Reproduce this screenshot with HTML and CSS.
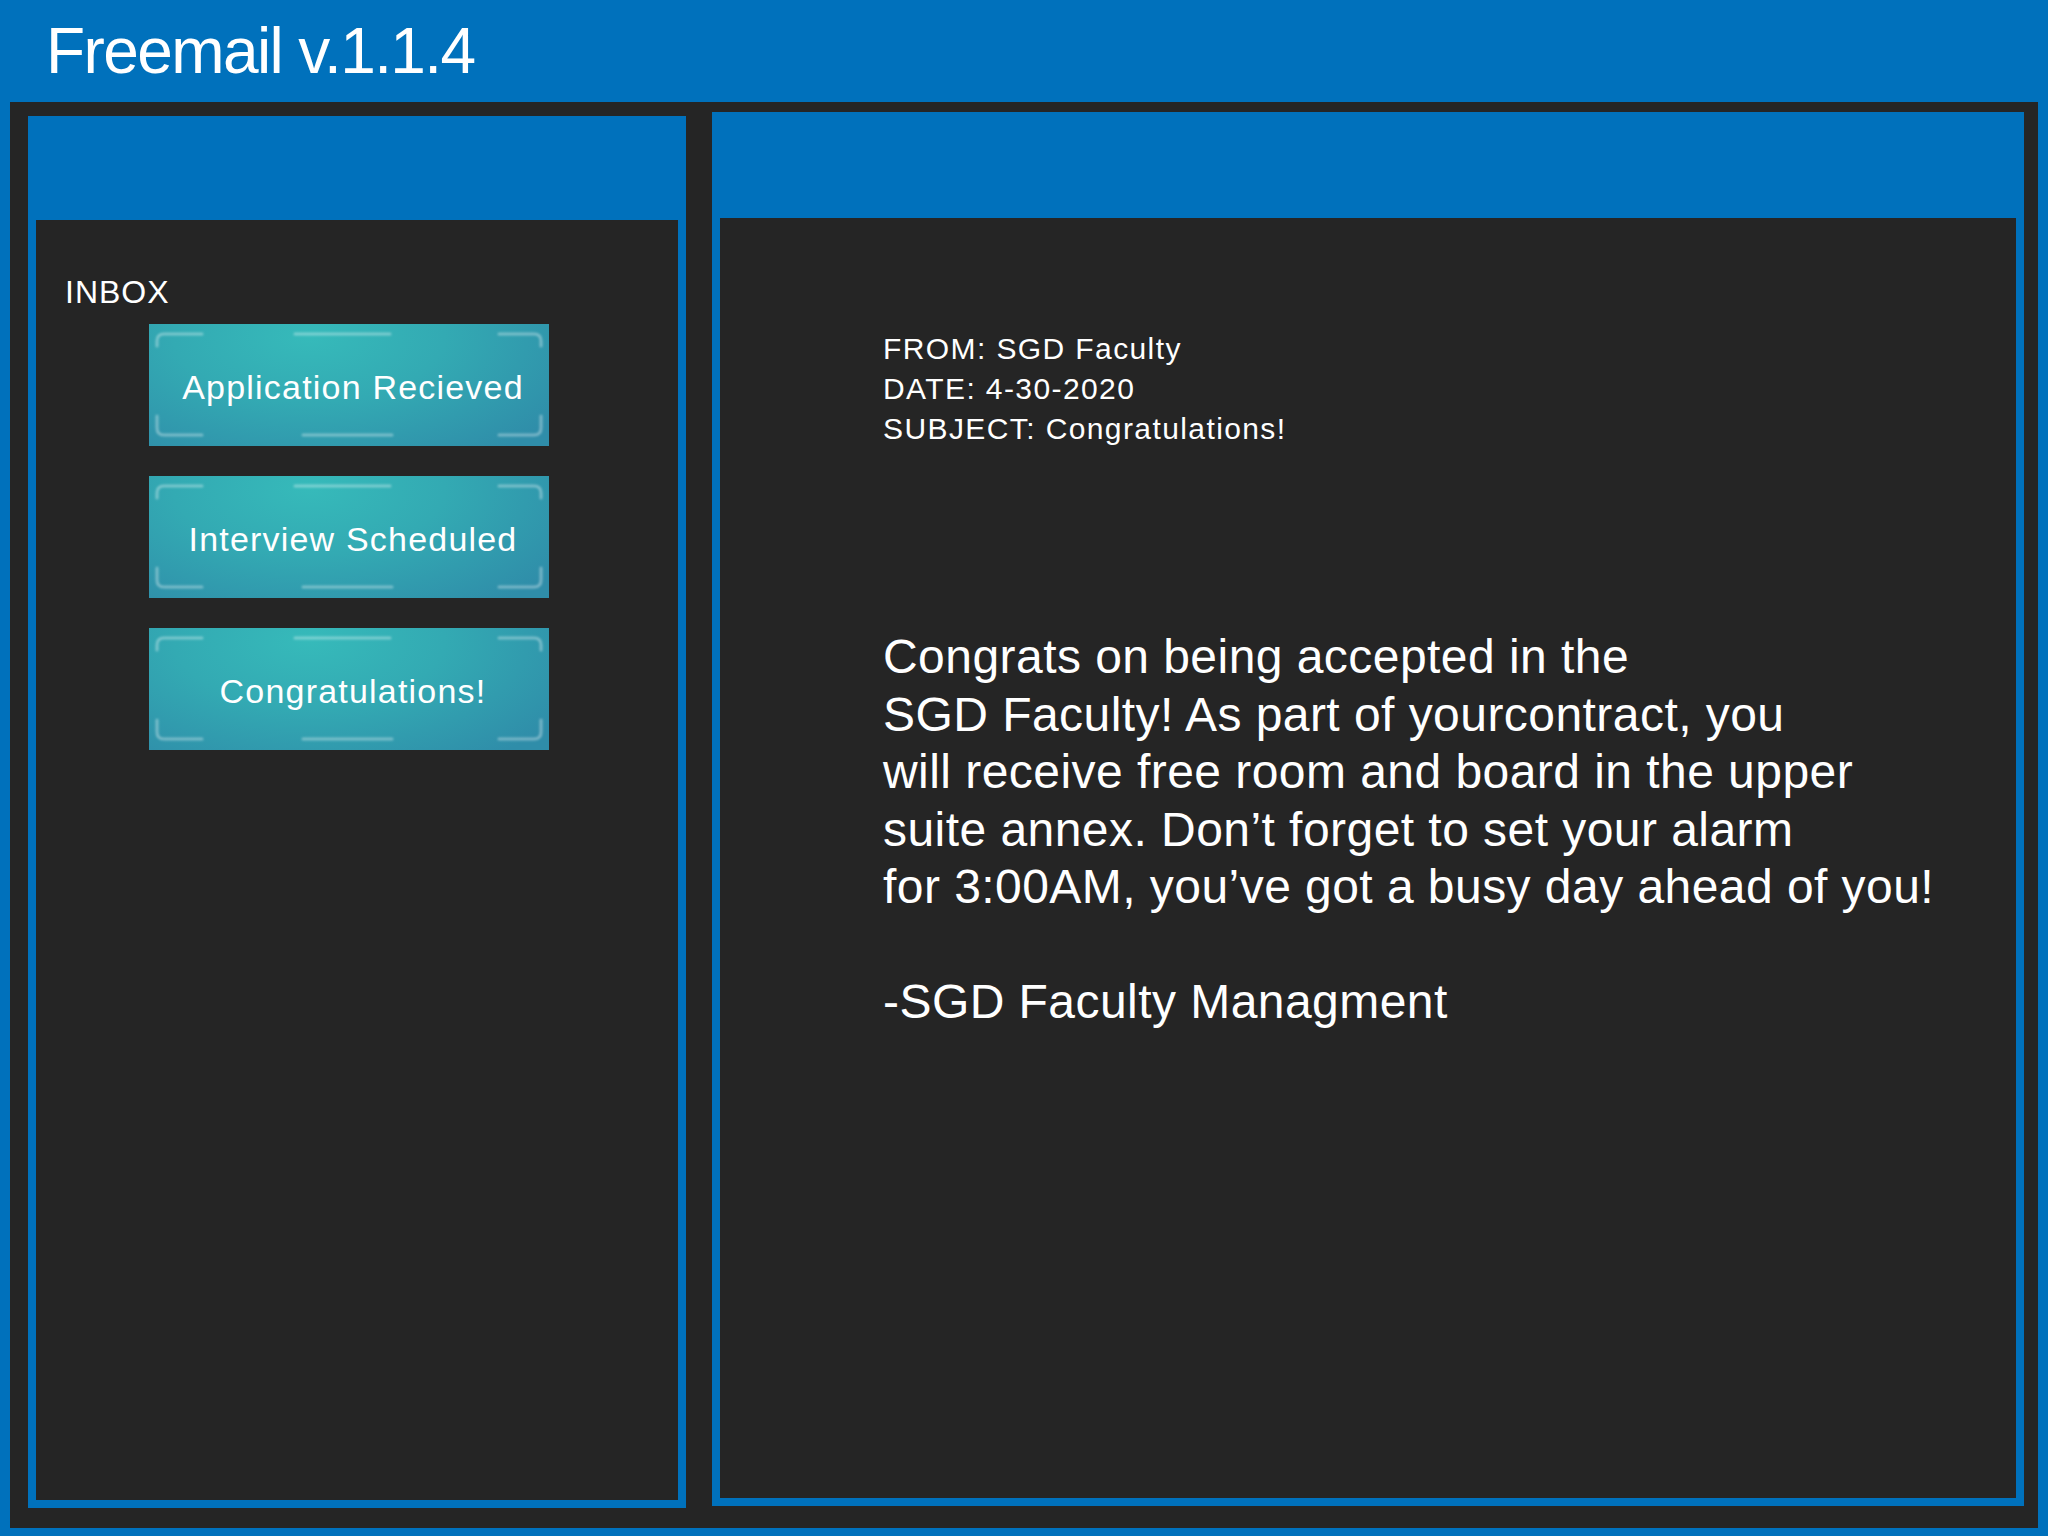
FILE: index.html
```html
<!DOCTYPE html>
<html>
<head>
<meta charset="utf-8">
<title>Freemail v.1.1.4</title>
<link rel="stylesheet" href="styles.css">
</head>
<body>
<header class="titlebar"><h1 class="title">Freemail v.1.1.4</h1></header>
<main class="frame">
  <section class="panel panel-left">
    <div class="panel-inner inbox">
      <div class="inbox-label">INBOX</div>
      <div class="mail-list">
        <button class="mail-btn"><svg class="deco" viewBox="0 0 400 122" preserveAspectRatio="none"><defs><filter id="soft1" x="-5%" y="-20%" width="110%" height="140%"><feGaussianBlur stdDeviation="0.9"/></filter></defs><g class="deco-lines" filter="url(#soft1)"><path d="M53 10 H15 Q8 10 8 17 V22"/><path d="M350 10 H385 Q392 10 392 17 V22"/><path d="M8 92 V104 Q8 111 15 111 H53"/><path d="M392 92 V104 Q392 111 385 111 H350"/><path d="M146 10 H241"/><path d="M154 111 H243"/></g></svg><span class="btn-text">Application Recieved</span></button>
        <button class="mail-btn"><svg class="deco" viewBox="0 0 400 122" preserveAspectRatio="none"><g class="deco-lines" filter="url(#soft1)"><path d="M53 10 H15 Q8 10 8 17 V22"/><path d="M350 10 H385 Q392 10 392 17 V22"/><path d="M8 92 V104 Q8 111 15 111 H53"/><path d="M392 92 V104 Q392 111 385 111 H350"/><path d="M146 10 H241"/><path d="M154 111 H243"/></g></svg><span class="btn-text">Interview Scheduled</span></button>
        <button class="mail-btn"><svg class="deco" viewBox="0 0 400 122" preserveAspectRatio="none"><g class="deco-lines" filter="url(#soft1)"><path d="M53 10 H15 Q8 10 8 17 V22"/><path d="M350 10 H385 Q392 10 392 17 V22"/><path d="M8 92 V104 Q8 111 15 111 H53"/><path d="M392 92 V104 Q392 111 385 111 H350"/><path d="M146 10 H241"/><path d="M154 111 H243"/></g></svg><span class="btn-text">Congratulations!</span></button>
      </div>
    </div>
  </section>
  <section class="panel panel-right">
    <div class="panel-inner message">
      <div class="meta">
        <div>FROM: SGD Faculty</div>
        <div>DATE: 4-30-2020</div>
        <div>SUBJECT: Congratulations!</div>
      </div>
      <div class="body-text">Congrats on being accepted in the<br>SGD Faculty! As part of yourcontract, you<br>will receive free room and board in the upper<br>suite annex. Don’t forget to set your alarm<br>for 3:00AM, you’ve got a busy day ahead of you!<br><br>-SGD Faculty Managment</div>
    </div>
  </section>
</main>
</body>
</html>
```
FILE: styles.css
```css
html, body {
  margin: 0;
  padding: 0;
}
body {
  width: 2048px;
  height: 1536px;
  background: #0071bc;
  font-family: "Liberation Sans", Arial, sans-serif;
  color: #ffffff;
  overflow: hidden;
}
.titlebar {
  height: 102px;
  box-sizing: border-box;
  padding-left: 46px;
}
.title {
  margin: 0;
  padding-top: 15px;
  font-weight: normal;
  font-size: 64px;
  line-height: 72px;
  letter-spacing: -1.6px;
}
.frame {
  margin: 0 10px;
  height: 1426px;
  background: #252525;
  display: flex;
  align-items: flex-start;
  gap: 26px;
  padding: 0 14px 0 18px;
  box-sizing: border-box;
}
.panel {
  background: #0071bc;
  box-sizing: border-box;
  padding: 0 8px 8px 8px;
}
.panel-left {
  margin-top: 14px;
  width: 658px;
  height: 1392px;
  padding-top: 104px;
}
.panel-right {
  margin-top: 10px;
  width: 1312px;
  height: 1394px;
  padding-top: 106px;
}
.panel-inner {
  background: #252525;
  height: 100%;
  box-sizing: border-box;
}
.inbox {
  padding: 52px 0 0 29px;
}
.inbox-label {
  font-size: 32px;
  line-height: 40px;
  letter-spacing: 1px;
}
.mail-list {
  margin-top: 12px;
  margin-left: 84px;
  display: flex;
  flex-direction: column;
  gap: 30px;
}
.mail-btn {
  position: relative;
  width: 400px;
  height: 122px;
  border: none;
  padding: 4px 0 0 0;
  margin: 0;
  background: radial-gradient(ellipse 75% 120% at 40% 10%, #36baba 0%, #33aab3 45%, #2f8da9 100%);
  display: flex;
  align-items: center;
  justify-content: center;
  font-family: "Liberation Sans", Arial, sans-serif;
  color: #ffffff;
  font-size: 34px;
  letter-spacing: 1.2px;
  cursor: pointer;
}
.btn-text {
  position: relative;
  padding-left: 8px;
}
.deco {
  position: absolute;
  left: 0;
  top: 0;
  width: 400px;
  height: 122px;
}
.deco-lines path {
  fill: none;
  stroke: rgba(255, 255, 255, 0.34);
  stroke-width: 3;
  stroke-linecap: round;
}
.message {
  padding: 111px 0 0 163px;
}
.meta {
  font-size: 30px;
  line-height: 40px;
  letter-spacing: 1.4px;
}
.body-text {
  margin-top: 179px;
  font-size: 48px;
  line-height: 57.5px;
  letter-spacing: 0.45px;
}
```
